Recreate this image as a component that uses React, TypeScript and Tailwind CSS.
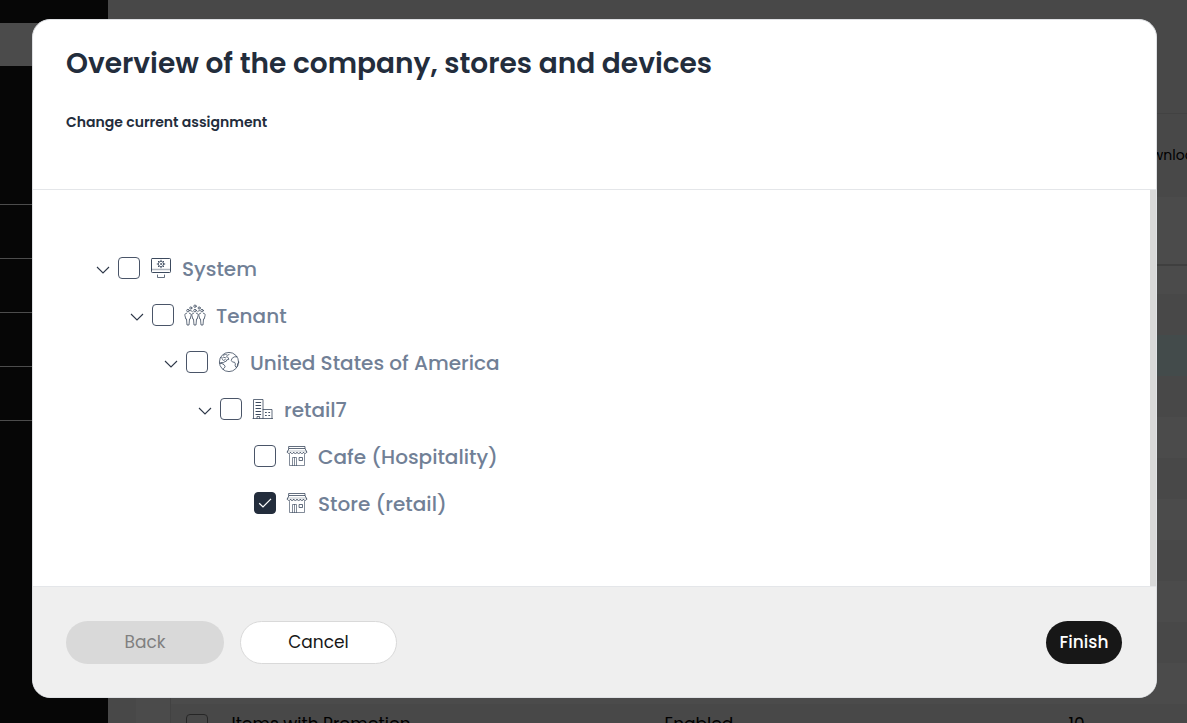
import { useState } from "react";
import type { ReactNode } from "react";

function Glyph({ children }: { children: ReactNode }) {
  return (
    <svg
      viewBox="0 0 22 22"
      className="h-[22px] w-[22px] shrink-0 text-[#3c4a5e]"
      fill="none"
      stroke="currentColor"
      strokeWidth="0.8"
      strokeLinecap="round"
      strokeLinejoin="round"
      aria-hidden="true"
    >
      {children}
    </svg>
  );
}

function SystemIcon() {
  return (
    <Glyph>
      <rect x="1.5" y="1.5" width="19" height="14" rx="0.8" strokeWidth="1" />
      <path d="M2 12.5h18" strokeOpacity="0.4" strokeWidth="1.4" />
      <circle cx="11" cy="7" r="2.7" />
      <circle cx="11" cy="7" r="0.6" />
      <path
        d="M11 3.2v.8M11 10v.8M7.2 7h.8M14 7h.8M8.3 4.3l.6.6M13.1 9.1l.6.6M13.7 4.3l-.6.6M8.9 9.1l-.6.6"
        strokeWidth="1"
      />
      <path d="M7.5 18v2.5h7v-2.5" />
    </Glyph>
  );
}

function PersonFront({ x }: { x: number }) {
  return (
    <g transform={`translate(${x} 0)`}>
      <circle cx="0" cy="6.6" r="1.3" />
      <path d="M-1.4 9.2c-1.4.2-1.9 1-1.7 2.2l.9 3.6h.7l.5 6h2l.5-6h.7l.9-3.6c.2-1.2-.3-2-1.7-2.2" />
    </g>
  );
}

function TenantIcon() {
  return (
    <Glyph>
      <g strokeWidth="0.8">
        <circle cx="11" cy="2.2" r="1.2" />
        <circle cx="6.8" cy="4" r="1.1" />
        <circle cx="15.2" cy="4" r="1.1" />
        <path d="M6.5 6.6c1.1 0 1.6.4 1.8 1.2M15.5 6.6c-1.1 0-1.6.4-1.8 1.2" />
        <PersonFront x={4} />
        <PersonFront x={11} />
        <PersonFront x={18} />
      </g>
    </Glyph>
  );
}

function GlobeIcon() {
  return (
    <Glyph>
      <circle cx="11" cy="11" r="9.6" />
      <path d="M2.6 6.8l2 .2 1.2-1 1.4 1 1.6-1.4 1.5 1.1.4 1.8-1.9.3-.6 1.5-1.8.4-.9 1.3-1.5-.6-1.7.6" />
      <path d="M5.5 4.2l2-.8 2 .9 1.6-.8M4.4 8.6l1.2.8 1.6-.8" />
      <path d="M1.6 12.2l2.4.3 2.4 1.6.8 1.8-1.5 1.5-.5 1.2" />
      <path d="M19 5.7l-2.8.2-2.4 1.7-.5 2 1.3 1.5 1.9.1.9 1.7-.3 2 1.2 1.6 1.1-1.3.2-2.2 1-1.4" />
    </Glyph>
  );
}

function CompanyIcon() {
  return (
    <Glyph>
      <path d="M1 20.5h19.5M1.5 20.5V1.5h9.5v19M11 11.5h9v9" />
      <path d="M4 4.5h4.6M4 7.5h4.6M4 10.5h4.6M4 13.5h4.6M4 16.5h4.6" strokeWidth="1.2" />
      <path d="M5 20.5v-2h2.6v2" />
      <path d="M13.5 14.5h.8M16.8 14.5h.8M13.5 17.5h.8M16.8 17.5h.8" strokeWidth="1.2" />
    </Glyph>
  );
}

function StoreIcon() {
  return (
    <Glyph>
      <path d="M3 1.5h16v2H3zM3 3.5L1.3 7M19 3.5L20.7 7" />
      <path d="M1.3 7c0 2 3.2 2 3.2 0 0 2 3.2 2 3.2 0 0 2 3.3 2 3.3 0 0 2 3.3 2 3.3 0 0 2 3.2 2 3.2 0 0 2 3.2 2 3.2 0" />
      <path d="M1.8 6h18.4" strokeOpacity="0.4" />
      <path d="M3.5 9.5v11h15v-11M6.5 20.5v-8h4v8M8.5 12.5v8" strokeOpacity="0.8" />
      <path d="M13.5 12.5h3v3h-3z" />
    </Glyph>
  );
}

type TreeNode = {
  id: string;
  label: string;
  icon: ReactNode;
  children?: TreeNode[];
};

const tree: TreeNode[] = [
  {
    id: "system",
    label: "System",
    icon: <SystemIcon />,
    children: [
      {
        id: "tenant",
        label: "Tenant",
        icon: <TenantIcon />,
        children: [
          {
            id: "usa",
            label: "United States of America",
            icon: <GlobeIcon />,
            children: [
              {
                id: "retail7",
                label: "retail7",
                icon: <CompanyIcon />,
                children: [
                  { id: "cafe", label: "Cafe (Hospitality)", icon: <StoreIcon /> },
                  { id: "store", label: "Store (retail)", icon: <StoreIcon /> },
                ],
              },
            ],
          },
        ],
      },
    ],
  },
];

function Branch({ node, selected, onSelect }: { node: TreeNode; selected: string; onSelect: (id: string) => void }) {
  const [open, setOpen] = useState(true);
  return (
    <li>
      <div className="flex h-[47px] items-center">
        <div className="mr-2 w-3.5">
          {node.children && (
            <button
              type="button"
              aria-label={`Toggle ${node.label}`}
              aria-expanded={open}
              onClick={() => setOpen(!open)}
              className="block pt-1"
            >
              <svg viewBox="0 0 14 14" className="h-3.5 w-3.5 text-[#2d3748]" fill="none" stroke="currentColor" strokeWidth="1.1">
                <path d="M1 4l6 6 6-6" />
              </svg>
            </button>
          )}
        </div>
        <span className="mr-2.5 grid">
          <input
            id={node.id}
            type="checkbox"
            checked={selected === node.id}
            onChange={() => onSelect(node.id)}
            className="peer h-[22px] w-[22px] appearance-none rounded-[4px] border border-[#4a5568] bg-white [grid-area:1/1] checked:border-[#232d3c] checked:bg-[#232d3c]"
          />
          <svg
            viewBox="0 0 22 22"
            className="pointer-events-none invisible h-[22px] w-[22px] text-white [grid-area:1/1] peer-checked:visible"
            fill="none"
            stroke="currentColor"
            strokeWidth="1.3"
            aria-hidden="true"
          >
            <path d="M5.2 11.2l3.8 3.7 8-8" />
          </svg>
        </span>
        <label htmlFor={node.id} className="flex items-center gap-2.5 text-xl font-medium text-[#718096]">
          {node.icon}
          <span className="pt-0.5">{node.label}</span>
        </label>
      </div>
      {node.children && open && (
        <ul className="pl-[34px]">
          {node.children.map((child) => (
            <Branch key={child.id} node={child} selected={selected} onSelect={onSelect} />
          ))}
        </ul>
      )}
    </li>
  );
}

function Sidebar() {
  return (
    <aside className="w-[108px] shrink-0 bg-[#171717] pt-[23px]">
      <div className="h-[43px] bg-[#fafafa]" />
      <ul className="pt-[85px]">
        {[0, 1, 2, 3, 4].map((item) => (
          <li key={item} className="h-[54px] border-b border-white" />
        ))}
      </ul>
    </aside>
  );
}

function Backdrop() {
  const rows = [0, 1, 2, 3, 4, 5, 6, 7, 8, 9];
  return (
    <div className="flex h-full bg-[#f0f0f0]" aria-hidden="true">
      <Sidebar />
      <div className="min-w-0 flex-1 overflow-hidden">
        <div className="h-[114px] border-b border-[#dcdcdc]" />
        <div className="flex h-[83px] items-center justify-end pb-0.5">
          <span className="w-[54px] whitespace-nowrap text-sm text-black">Download</span>
        </div>
        <div className="ml-7 bg-[#fafafa] pl-[34px]">
          <div className="h-[97px] pt-[67px]">
            <div className="h-0.5 bg-[#d4d4d4]" />
          </div>
          <table className="w-full table-fixed border-l border-[#dcdcdc] text-[17px] text-black">
            <tbody>
              {rows.map((row) => (
                <tr key={row} className="h-[41px] odd:bg-[#f0f0f0] even:bg-[#fafafa] nth-2:bg-[#e2fcfc]">
                  <td className="w-[61px]" />
                  <td className="w-[433px]" />
                  <td className="w-[404px]" />
                  <td />
                </tr>
              ))}
              <tr className="h-[41px] bg-[#f0f0f0]">
                <td className="w-[61px] pl-[15px]">
                  <input
                    type="checkbox"
                    tabIndex={-1}
                    aria-label="Items with Promotion"
                    className="block h-[22px] w-[22px] appearance-none rounded-[4px] border border-[#808080]"
                  />
                </td>
                <td>Items with Promotion</td>
                <td>Enabled</td>
                <td>10</td>
              </tr>
            </tbody>
          </table>
        </div>
      </div>
    </div>
  );
}

export default function App() {
  const [selected, setSelected] = useState("store");
  return (
    <div className="grid h-screen overflow-hidden font-[Poppins,Inter,sans-serif]">
      <div className="h-screen overflow-hidden [grid-area:1/1]">
        <Backdrop />
      </div>
      <div className="z-10 h-screen bg-black/70 pt-[19px] pr-[30px] pb-[25px] pl-8 [grid-area:1/1]">
        <section
          role="dialog"
          aria-modal="true"
          aria-labelledby="dialog-title"
          className="flex h-full flex-col overflow-hidden rounded-[18px] border border-[#dfe1e4] bg-white text-[#232d3c]"
        >
          <header className="h-[170px] shrink-0 border-b border-[#e4e6e9] px-[33px] pt-6">
            <h1 id="dialog-title" className="text-[28px] leading-10 font-semibold">
              Overview of the company, stores and devices
            </h1>
            <p className="pt-7 text-sm leading-5 font-semibold">Change current assignment</p>
          </header>
          <div className="flex min-h-0 flex-1">
            <ul className="min-w-0 flex-1 overflow-hidden pt-[54px] pl-[63px]">
              {tree.map((node) => (
                <Branch key={node.id} node={node} selected={selected} onSelect={setSelected} />
              ))}
            </ul>
            <div className="w-1.5 bg-[#d9d9d9]" />
          </div>
          <footer className="flex h-[111px] shrink-0 items-center gap-4 border-t border-[#e4e6e9] bg-[#efefef] pr-[34px] pl-[33px] text-[17px]">
            <button type="button" disabled className="h-[43px] w-[158px] rounded-full bg-[#d9d9d9] pt-0.5 text-[#808080]">
              Back
            </button>
            <button type="button" className="h-[43px] w-[157px] rounded-full border border-[#d9d9d9] bg-white pt-0.5 text-[#171717]">
              Cancel
            </button>
            <button type="button" className="ml-auto h-[43px] w-[76px] rounded-full bg-[#171717] pt-0.5 font-medium text-white">
              Finish
            </button>
          </footer>
        </section>
      </div>
    </div>
  );
}
